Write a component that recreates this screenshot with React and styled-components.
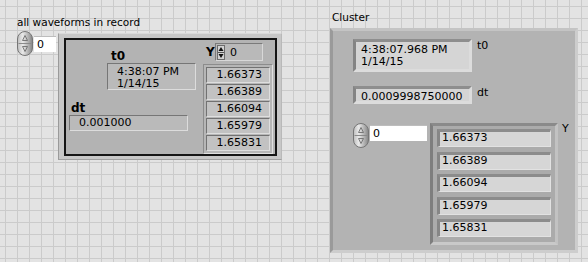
import React from 'react';
import styled, { createGlobalStyle } from 'styled-components';

const GlobalStyle = createGlobalStyle`
  html, body {
    margin: 0;
    padding: 0;
  }
  body {
    width: 588px;
    height: 262px;
    overflow: hidden;
    font-family: "DejaVu Sans", Verdana, sans-serif;
    font-size: 11px;
    color: #000;
    background-color: #e3e3e3;
    background-image:
      linear-gradient(to right, #cbcbcb 1px, transparent 1px),
      linear-gradient(to bottom, #cbcbcb 1px, transparent 1px);
    background-size: 12px 12px;
    background-position: 5px 6px;
  }
`;

const Page = styled.div`
  display: flex;
  align-items: flex-start;
  padding-left: 17px;
`;

// ---- left: array of waveforms ----

const ArrayControl = styled.div`
  margin-top: 15px;
  width: 265px;
`;

const CaptionLabel = styled.div`
  height: 14px;
  line-height: 14px;
  font-size: 10.5px;
  white-space: nowrap;
  margin-left: ${p => p.$indent || 0}px;
`;

const ArrayRow = styled.div`
  display: flex;
  align-items: flex-start;
  margin-top: 2px;
`;

const IndexBox = styled.div`
  box-sizing: border-box;
  width: ${p => p.$w}px;
  height: 16px;
  margin-top: ${p => p.$top}px;
  margin-left: 1px;
  padding-left: 3px;
  line-height: 16px;
  background: #fff;
  border-top: 1px solid #bdbdbd;
`;

const ElementFrame = styled.div`
  box-sizing: border-box;
  width: 224px;
  height: 127px;
  margin-top: 2px;
  margin-left: 2px;
  padding: 4px 4px 3px 5px;
  background: #c7c7c7;
  border-top: 1px solid #d9d9d9;
  border-left: 1px solid #9a9a9a;
  border-right: 1px solid #b9b9b9;
  border-bottom: 1px solid #a0a0a0;
`;

const ClusterInner = styled.div`
  box-sizing: border-box;
  width: 100%;
  height: 100%;
  display: flex;
  background: #b3b3b3;
  border: 2px solid #151515;
`;

const InnerLeft = styled.div`
  width: 136px;
  display: flex;
  flex-direction: column;
`;

const FieldGroup = styled.div`
  display: flex;
  flex-direction: column;
  margin: ${p => p.$top}px 0 0 ${p => p.$left}px;
`;

const BoldLabel = styled.div`
  font-weight: bold;
  font-size: 12px;
  line-height: 14px;
  height: 14px;
  padding-left: ${p => p.$indent || 0}px;
  width: ${p => (p.$w ? `${p.$w}px` : 'auto')};
`;

const FlatBox = styled.div`
  box-sizing: border-box;
  width: ${p => p.$w}px;
  height: ${p => p.$h}px;
  padding: ${p => p.$pad};
  line-height: ${p => p.$lh}px;
  background: #bababa;
  border-top: 1px solid #767676;
  border-left: 1px solid #767676;
  border-right: 1px solid #dcdcdc;
  border-bottom: 1px solid #dcdcdc;
  white-space: nowrap;
`;

const InnerRight = styled.div`
  display: flex;
  flex-direction: column;
  margin-left: 1px;
`;

const YRow = styled.div`
  display: flex;
  align-items: center;
  height: 18px;
  margin-top: 3px;
  padding-left: 3px;
`;

const YBox = styled.div`
  box-sizing: border-box;
  display: flex;
  align-items: center;
  gap: 5px;
  width: 48px;
  height: 18px;
  padding-left: 1px;
  background: #b9b9b9;
  border-top: 1px solid #7a7a7a;
  border-left: 1px solid #7a7a7a;
  border-right: 1px solid #d8d8d8;
  border-bottom: 1px solid #d8d8d8;
`;

const SmallList = styled.div`
  box-sizing: border-box;
  width: 70px;
  height: 90px;
  margin-top: 3px;
  padding: 2px;
  display: flex;
  flex-direction: column;
  gap: 1px;
  background: #b6b6b6;
  border-top: 1px solid #8c8c8c;
  border-left: 1px solid #8c8c8c;
  border-right: 1px solid #e0e0e0;
  border-bottom: 1px solid #e0e0e0;
`;

const SmallItem = styled.div`
  box-sizing: border-box;
  height: 16px;
  padding-right: 7px;
  line-height: 14px;
  text-align: right;
  background: #c2c2c2;
  border-top: 1px solid #727272;
  border-left: 1px solid #727272;
  border-right: 1px solid #dedede;
  border-bottom: 1px solid #dedede;
`;

// ---- right: cluster ----

const ClusterControl = styled.div`
  margin-top: 10px;
  margin-left: 48px;
`;

const ClusterPanel = styled.div`
  box-sizing: border-box;
  width: 248px;
  height: 225px;
  margin-top: 4px;
  padding: 8px 0 0 20px;
  display: flex;
  flex-direction: column;
  background: #b3b3b3;
  border-style: solid;
  border-width: 3px;
  border-color: #c4c4c4 #cdcdcd #cdcdcd #9a9a9a;
`;

const FieldRow = styled.div`
  display: flex;
  align-items: flex-start;
  gap: 5px;
  margin-top: ${p => p.$top || 0}px;
`;

const SunkenBox = styled.div`
  box-sizing: border-box;
  width: ${p => p.$w}px;
  height: ${p => p.$h}px;
  padding: 2px 0 0 5px;
  line-height: 12px;
  white-space: nowrap;
  background: #d5d5d5;
  border-style: solid;
  border-width: 3px;
  border-color: #8e8e8e #dcdcdc #dcdcdc #848484;
`;

const PlainLabel = styled.div`
  line-height: 14px;
`;

const IndexRow = styled.div`
  display: flex;
  align-items: flex-start;
  margin-top: 19px;
`;

const BigList = styled.div`
  box-sizing: border-box;
  width: 128px;
  height: 122px;
  margin-left: 3px;
  padding: 3px 4px 0 4px;
  display: flex;
  flex-direction: column;
  gap: 4.5px;
  background: #ababab;
  border-style: solid;
  border-width: 3px;
  border-color: #8a8a8a #c2c2c2 #c9c9c9 #7e7e7e;
`;

const BigItem = styled.div`
  box-sizing: border-box;
  height: 18px;
  padding-left: 2px;
  line-height: 12px;
  background: #d6d6d6;
  border-style: solid;
  border-width: 3px 1px 1px 3px;
  border-color: #8c8c8c #e2e2e2 #e2e2e2 #868686;
`;

const YLabel = styled.div`
  margin-left: 4px;
  line-height: 12px;
`;

const Spinner = () => (
  <svg width="16" height="25" viewBox="0 0 16 25">
    <defs>
      <linearGradient id="spin" x1="0" y1="0" x2="1" y2="0">
        <stop offset="0" stopColor="#bdbdbd" />
        <stop offset="0.35" stopColor="#e9e9e9" />
        <stop offset="1" stopColor="#858585" />
      </linearGradient>
    </defs>
    <rect x="0.5" y="0.5" width="15" height="24" rx="7.5" fill="url(#spin)" stroke="#767676" />
    <line x1="1.5" y1="12.5" x2="14.5" y2="12.5" stroke="#8a8a8a" />
    <path d="M8 4.5 L10.5 9.5 L5.5 9.5 Z" fill="none" stroke="#6e6e6e" strokeWidth="0.9" />
    <path d="M8 20.5 L10.5 15.5 L5.5 15.5 Z" fill="none" stroke="#6e6e6e" strokeWidth="0.9" />
  </svg>
);

const MiniSpinner = () => (
  <svg width="8" height="15" viewBox="0 0 8 15">
    <rect x="0.5" y="0.5" width="7" height="14" fill="#d2d2d2" stroke="#6c6c6c" />
    <path d="M4 2 L6.5 6 L1.5 6 Z" fill="#111" />
    <path d="M4 13 L6.5 9 L1.5 9 Z" fill="#111" />
    <line x1="1" y1="7.5" x2="7" y2="7.5" stroke="#555" />
  </svg>
);

const values = ['1.66373', '1.66389', '1.66094', '1.65979', '1.65831'];

export default function App() {
  return (
    <>
      <GlobalStyle />
      <Page>
        <ArrayControl>
          <CaptionLabel>all waveforms in record</CaptionLabel>
          <ArrayRow>
            <Spinner />
            <IndexBox $w={22} $top={5}>0</IndexBox>
            <ElementFrame>
              <ClusterInner>
                <InnerLeft>
                  <FieldGroup $top={9} $left={41}>
                    <BoldLabel $indent={4}>t0</BoldLabel>
                    <FlatBox $w={89} $h={27} $pad="2px 0 0 9px" $lh={12}>
                      4:38:07 PM
                      <br />
                      1/14/15
                    </FlatBox>
                  </FieldGroup>
                  <FieldGroup $top={11} $left={3}>
                    <BoldLabel $indent={2}>dt</BoldLabel>
                    <FlatBox $w={119} $h={16} $pad="0 0 0 9px" $lh={14}>
                      0.001000
                    </FlatBox>
                  </FieldGroup>
                </InnerLeft>
                <InnerRight>
                  <YRow>
                    <BoldLabel $w={9}>Y</BoldLabel>
                    <YBox>
                      <MiniSpinner />
                      0
                    </YBox>
                  </YRow>
                  <SmallList>
                    {values.map(v => (
                      <SmallItem key={v}>{v}</SmallItem>
                    ))}
                  </SmallList>
                </InnerRight>
              </ClusterInner>
            </ElementFrame>
          </ArrayRow>
        </ArrayControl>

        <ClusterControl>
          <CaptionLabel $indent={2}>Cluster</CaptionLabel>
          <ClusterPanel>
            <FieldRow>
              <SunkenBox $w={119} $h={33}>
                4:38:07.968 PM
                <br />
                1/14/15
              </SunkenBox>
              <PlainLabel>t0</PlainLabel>
            </FieldRow>
            <FieldRow $top={14}>
              <SunkenBox $w={119} $h={18}>0.0009998750000</SunkenBox>
              <PlainLabel>dt</PlainLabel>
            </FieldRow>
            <IndexRow>
              <Spinner />
              <IndexBox $w={57} $top={2}>0</IndexBox>
              <BigList>
                {values.map(v => (
                  <BigItem key={v}>{v}</BigItem>
                ))}
              </BigList>
              <YLabel>Y</YLabel>
            </IndexRow>
          </ClusterPanel>
        </ClusterControl>
      </Page>
    </>
  );
}
